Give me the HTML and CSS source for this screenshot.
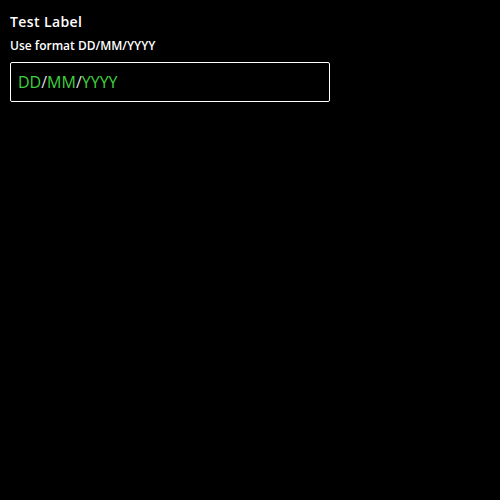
FILE: index.html
```html
<!DOCTYPE html>
<html>
<head>
<meta charset="utf-8">
<link rel="stylesheet" href="styles.css">
</head>
<body>
<div class="field">
  <div class="label">Test Label</div>
  <div class="hint">Use format DD/MM/YYYY</div>
  <div class="input"><span class="seg">DD</span><span class="sep">/</span><span class="seg">MM</span><span class="sep">/</span><span class="seg">YYYY</span></div>
</div>
</body>
</html>
```
FILE: styles.css
```css
html, body {
  margin: 0;
  background: #000;
  color: #fff;
  font-family: "Open Sans", sans-serif;
}
.field {
  padding: 10px;
  display: flex;
  flex-direction: column;
}
.label {
  font-size: 14px;
  font-weight: 600;
  line-height: 24px;
  letter-spacing: 0.4px;
}
.hint {
  font-size: 12px;
  font-weight: 600;
  line-height: 18px;
  margin-top: 3px;
}
.input {
  margin-top: 7px;
  width: 320px;
  height: 40px;
  box-sizing: border-box;
  border: 1px solid #fff;
  border-radius: 2px;
  padding: 0 7px;
  display: flex;
  align-items: center;
  font-size: 16px;
}
.seg { color: #3dd13d; }
.sep { color: #ddd; }
```
